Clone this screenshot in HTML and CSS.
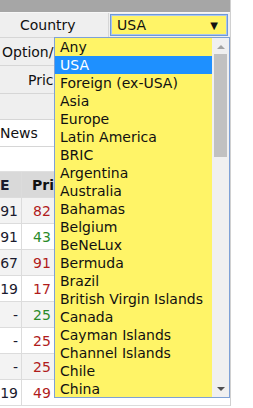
FILE: index.html
```html
<!DOCTYPE html>
<html>
<head>
<meta charset="utf-8">
<link rel="stylesheet" href="styles.css">
</head>
<body>
<div class="page">
  <div class="topbar"></div>
  <div class="row row-country">
    <div class="label">Country</div>
    <div class="selcell">
      <div class="select"><span>USA</span><span class="caret">▼</span></div>
    </div>
  </div>
  <div class="row row-option"><span class="opt">Option/</span></div>
  <div class="row row-price"><span class="price">Pric</span></div>
  <div class="row row-blank"></div>
  <div class="row row-news"><span class="news">News</span></div>
  <div class="row row-space"></div>
  <div class="trow thead"><div class="c1">E</div><div class="c2">Pri</div></div>
  <div class="trow odd"><div class="c1">91</div><div class="c2 red">82</div></div>
  <div class="trow"><div class="c1">91</div><div class="c2 green">43</div></div>
  <div class="trow odd"><div class="c1">67</div><div class="c2 red">91</div></div>
  <div class="trow"><div class="c1">19</div><div class="c2 red">17</div></div>
  <div class="trow odd"><div class="c1">-</div><div class="c2 green">25</div></div>
  <div class="trow"><div class="c1">-</div><div class="c2 red">25</div></div>
  <div class="trow odd"><div class="c1">-</div><div class="c2 red">25</div></div>
  <div class="trow"><div class="c1">19</div><div class="c2 red">49</div></div>

  <div class="dropdown">
    <ul class="list">
      <li>Any</li>
      <li class="sel">USA</li>
      <li>Foreign (ex-USA)</li>
      <li>Asia</li>
      <li>Europe</li>
      <li>Latin America</li>
      <li>BRIC</li>
      <li>Argentina</li>
      <li>Australia</li>
      <li>Bahamas</li>
      <li>Belgium</li>
      <li>BeNeLux</li>
      <li>Bermuda</li>
      <li>Brazil</li>
      <li>British Virgin Islands</li>
      <li>Canada</li>
      <li>Cayman Islands</li>
      <li>Channel Islands</li>
      <li>Chile</li>
      <li>China</li>
    </ul>
    <div class="scrollbar">
      <div class="arrow up"></div>
      <div class="thumb"></div>
      <div class="track"></div>
      <div class="arrow down"></div>
    </div>
  </div>
</div>
</body>
</html>
```
FILE: styles.css
```css
* { box-sizing: border-box; }
html, body { margin: 0; padding: 0; background: #fff; }
body {
  font-family: "DejaVu Sans", Verdana, sans-serif;
  font-size: 14px;
  color: #111;
}
.page {
  position: relative;
  width: 231px;
  border-right: 1px solid #d0d0d0;
  overflow: hidden;
}
.topbar { height: 12px; background: #a6a6a6; }
.row {
  display: flex;
  align-items: center;
  background: #efefef;
  border-bottom: 1px solid #d6d6d6;
  white-space: nowrap;
}
.row-country {
  height: 26px;
  display: grid;
  grid-template-columns: 109px 1fr;
  border-top: 1px solid #f7f7f7;
}
.label { padding-left: 20px; border-right: 1px solid #d6d6d6; height: 100%; display: flex; align-items: center; }
.selcell { height: 100%; padding: 1px 2px 1px 1px; }
.select {
  height: 100%;
  background: #fff467;
  border: 1px solid #6f9ad8;
  box-shadow: inset 0 0 0 1px #a9c5ee;
  display: flex;
  align-items: center;
  justify-content: space-between;
  padding: 0 9px 0 6px;
}
.caret { font-size: 10px; }
.row-option { height: 28px; }
.opt { margin-left: 2px; }
.row-price { height: 28px; }
.price { margin-left: 28px; }
.row-blank { height: 26px; }
.row-news { height: 27px; background: #fff; }
.news { margin-left: 0; }
.row-space { height: 25px; background: #fff; border-bottom: 1px solid #e0e0e0; }
.trow {
  display: grid;
  grid-template-columns: 22px 1fr;
  height: 26px;
  border-bottom: 1px solid #dcdcdc;
  background: #fff;
  white-space: nowrap;
}
.trow.odd { background: #f3f3f3; }
.trow > div { display: flex; align-items: center; }
.c1 { justify-content: flex-end; padding-right: 3px; border-right: 1px solid #dcdcdc; color: #1a1a2e; }
.c2 { padding-left: 11px; }
.thead { background: #d9d9d9; font-weight: bold; }
.thead .c1 { justify-content: flex-start; padding-left: 0; }
.thead .c2 { padding-left: 10px; }
.red { color: #b01c1c; }
.green { color: #2a8a2a; }

.dropdown {
  position: absolute;
  left: 54px;
  top: 37px;
  width: 176px;
  height: 361px;
  border: 1px solid #7ea1d6;
  background: #fff467;
  display: flex;
}
.list {
  list-style: none;
  margin: 0;
  padding: 0;
  flex: 1;
  overflow: hidden;
}
.list li {
  height: 18px;
  line-height: 18px;
  padding-left: 5px;
  white-space: nowrap;
  color: #111;
}
.list li.sel { background: #1e90ff; color: #fff; }
.scrollbar {
  width: 17px;
  background: #f0f0f0;
  display: flex;
  flex-direction: column;
  align-items: center;
}
.arrow { width: 0; height: 0; border-left: 4px solid transparent; border-right: 4px solid transparent; }
.arrow.up { border-bottom: 4px solid #a3a3a3; margin: 7px 0 5px; }
.arrow.down { border-top: 4px solid #505050; margin: 5px 0 6px; }
.thumb { width: 13px; height: 103px; background: #c1c1c1; }
.track { flex: 1; }
```
